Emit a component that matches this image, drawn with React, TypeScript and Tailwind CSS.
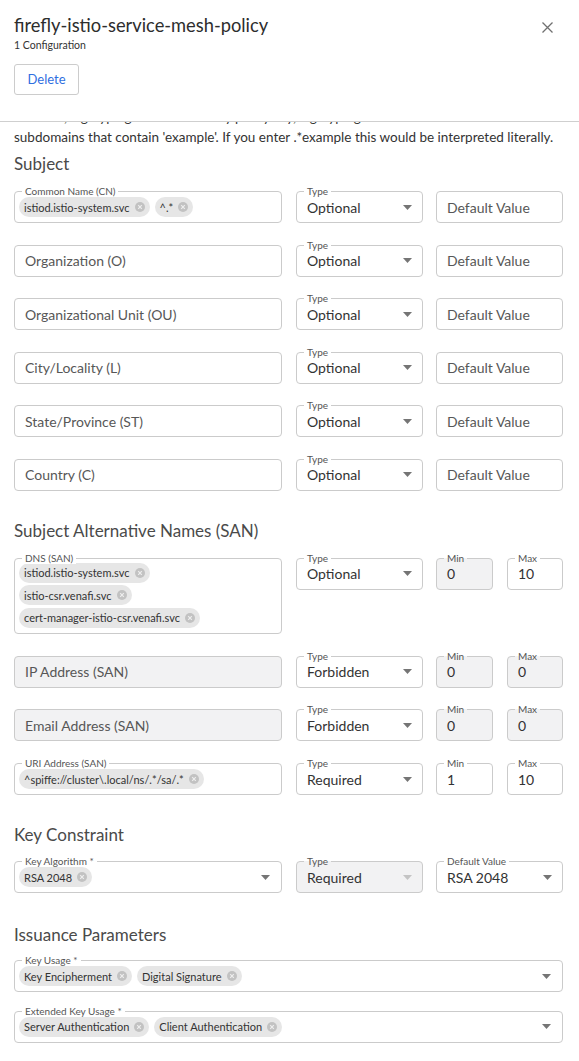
import React from "react";

const FONT = { fontFamily: "Lato, 'Noto Sans', sans-serif" };

function Arrow({ light }: { light?: boolean }) {
  return (
    <svg width="9" height="5" viewBox="0 0 9 5" className="shrink-0">
      <path d="M0 0 L9 0 L4.5 5 Z" fill={light ? "#c4c4c4" : "#757575"} />
    </svg>
  );
}

function Chip({ text }: { text: string }) {
  return (
    <span className="inline-flex h-[20px] items-center gap-[5px] rounded-full bg-[#e6e6e6] pl-[5px] pr-[5px] text-[11px] leading-none text-[#333] whitespace-nowrap">
      <span>{text}</span>
      <svg width="10" height="10" viewBox="0 0 10 10">
        <circle cx="5" cy="5" r="5" fill="#c2c2c2" />
        <path d="M3.2 3.2 L6.8 6.8 M6.8 3.2 L3.2 6.8" stroke="#eeeeee" strokeWidth="1.2" />
      </svg>
    </span>
  );
}

function Box({
  label,
  gray,
  className = "",
  children,
}: {
  label?: string;
  gray?: boolean;
  className?: string;
  children?: React.ReactNode;
}) {
  return (
    <div
      className={`relative rounded-[4px] border border-[#cbcbcb] ${
        gray ? "bg-[#f2f2f3]" : "bg-white"
      } ${className}`}
    >
      {label && (
        <span
          className={`absolute left-[7px] -top-[7px] px-[3px] text-[10px] leading-[12px] text-[#555] whitespace-nowrap ${
            gray
              ? "bg-[linear-gradient(to_bottom,#ffffff_50%,#f2f2f3_50%)]"
              : "bg-white"
          }`}
        >
          {label}
        </span>
      )}
      {children}
    </div>
  );
}

function Select({
  value,
  gray,
  light,
  label = "Type",
  className = "",
}: {
  value: string;
  gray?: boolean;
  light?: boolean;
  label?: string;
  className?: string;
}) {
  return (
    <Box label={label} gray={gray} className={`h-8 ${className}`}>
      <div className="flex h-full items-center justify-between pl-[10px] pr-[10px]">
        <span className="text-[14px] text-[#333]">{value}</span>
        <Arrow light={light} />
      </div>
    </Box>
  );
}

function TextBox({
  placeholder,
  value,
  label,
  gray,
  className = "",
}: {
  placeholder?: string;
  value?: string;
  label?: string;
  gray?: boolean;
  className?: string;
}) {
  return (
    <Box label={label} gray={gray} className={`h-8 ${className}`}>
      <div className="flex h-full items-center pl-[10px]">
        {value !== undefined ? (
          <span className="text-[14px] text-[#333]">{value}</span>
        ) : (
          <span className="text-[14px] text-[#575757]">{placeholder}</span>
        )}
      </div>
    </Box>
  );
}

function ChipBox({
  label,
  chips,
  arrow,
  className = "",
}: {
  label: string;
  chips: string[];
  arrow?: boolean;
  className?: string;
}) {
  return (
    <Box label={label} className={`h-8 ${className}`}>
      <div className="flex h-full items-center justify-between pl-[4px] pr-[11px]">
        <div className="flex items-center gap-[5px]">
          {chips.map((c) => (
            <Chip key={c} text={c} />
          ))}
        </div>
        {arrow && <Arrow />}
      </div>
    </Box>
  );
}

function Heading({ children }: { children: React.ReactNode }) {
  return <h2 className="text-[17px] leading-[24px] text-[#4a4a4a]">{children}</h2>;
}

function SubjectRow({ name, chips }: { name: string; chips?: string[] }) {
  return (
    <div className="flex gap-[13px]">
      {chips ? (
        <ChipBox label={name} chips={chips} className="w-[268px] mr-[1px]" />
      ) : (
        <TextBox placeholder={name} className="w-[268px] mr-[1px]" />
      )}
      <Select value="Optional" className="w-[127px]" />
      <TextBox placeholder="Default Value" className="w-[127px]" />
    </div>
  );
}

function SanRow({
  name,
  type,
  min,
  max,
  disabled,
}: {
  name: string;
  type: string;
  min: string;
  max: string;
  disabled?: boolean;
}) {
  return (
    <div className="flex gap-[13px]">
      <TextBox placeholder={name} gray={disabled} className="w-[268px] mr-[1px]" />
      <Select value={type} className="w-[127px]" />
      <div className="flex gap-[14px]">
        <TextBox label="Min" value={min} gray={disabled} className="w-[57px]" />
        <TextBox label="Max" value={max} gray={disabled} className="w-[56px]" />
      </div>
    </div>
  );
}

export default function App() {
  return (
    <div className="h-[1061px] w-[579px] overflow-hidden bg-white text-[#333]" style={FONT}>
      {/* Header */}
      <div className="flex h-[122px] flex-col items-start border-b border-[#cfcfcf] pl-[14px] pr-[16px] pt-[13px]">
        <div className="flex w-full items-start justify-between">
          <div>
            <h1 className="text-[18.3px] leading-[24px] text-[#2d2d2d]">
              firefly-istio-service-mesh-policy
            </h1>
            <div className="mt-[2px] text-[10.5px] leading-[12px] text-[#333]">1 Configuration</div>
          </div>
          <button className="mt-[9px] mr-[10px] p-0">
            <svg width="11" height="11" viewBox="0 0 11 11" className="block">
              <path d="M0.5 0.5 L10.5 10.5 M10.5 0.5 L0.5 10.5" stroke="#707070" strokeWidth="1.3" />
            </svg>
          </button>
        </div>
        <button className="mt-[13px] h-[31px] w-[65px] rounded-[3px] border border-[#cccccc] bg-white text-[13px] text-[#2f6fdf]">
          Delete
        </button>
      </div>

      {/* Content */}
      <div className="pl-[14px] pr-[16px]">
        <div className="h-[5px] overflow-hidden">
          <p className="-mt-[15px] text-[13.5px] leading-[20px] text-[#333] whitespace-nowrap">
            wildcard, e.g. typing .* will match any policy key, e.g. typing .*
          </p>
        </div>
        <p className="text-[13.5px] leading-[20px] text-[#333] whitespace-nowrap">
          subdomains that contain 'example'. If you enter .*example this would be interpreted literally.
        </p>

        <div className="mt-[5px]">
          <Heading>Subject</Heading>
        </div>
        <div className="mt-[15px] flex flex-col gap-[21.6px]">
          <SubjectRow name="Common Name (CN)" chips={["istiod.istio-system.svc", "^.*"]} />
          <SubjectRow name="Organization (O)" />
          <SubjectRow name="Organizational Unit (OU)" />
          <SubjectRow name="City/Locality (L)" />
          <SubjectRow name="State/Province (ST)" />
          <SubjectRow name="Country (C)" />
        </div>

        <div className="mt-[28px]">
          <Heading>Subject Alternative Names (SAN)</Heading>
        </div>
        <div className="mt-[15px] flex flex-col gap-[21.7px]">
          <div className="flex gap-[13px]">
            <Box label="DNS (SAN)" className="w-[268px] mr-[1px]">
              <div className="flex flex-col items-start gap-[2.5px] pl-[4px] pt-[4px] pb-[5px]">
                <Chip text="istiod.istio-system.svc" />
                <Chip text="istio-csr.venafi.svc" />
                <Chip text="cert-manager-istio-csr.venafi.svc" />
              </div>
            </Box>
            <Select value="Optional" className="w-[127px]" />
            <div className="flex gap-[14px]">
              <TextBox label="Min" value="0" gray className="w-[57px]" />
              <TextBox label="Max" value="10" className="w-[56px]" />
            </div>
          </div>
          <SanRow name="IP Address (SAN)" type="Forbidden" min="0" max="0" disabled />
          <SanRow name="Email Address (SAN)" type="Forbidden" min="0" max="0" disabled />
          <div className="flex gap-[13px]">
            <ChipBox
              label="URI Address (SAN)"
              chips={["^spiffe://cluster\\.local/ns/.*/sa/.*"]}
              className="w-[268px] mr-[1px]"
            />
            <Select value="Required" className="w-[127px]" />
            <div className="flex gap-[14px]">
              <TextBox label="Min" value="1" className="w-[57px]" />
              <TextBox label="Max" value="10" className="w-[56px]" />
            </div>
          </div>
        </div>

        <div className="mt-[28px]">
          <Heading>Key Constraint</Heading>
        </div>
        <div className="mt-[14px] flex gap-[13px]">
          <ChipBox label="Key Algorithm *" chips={["RSA 2048"]} arrow className="w-[268px] mr-[1px]" />
          <Select value="Required" gray light className="w-[127px]" />
          <Select value="RSA 2048" label="Default Value" className="w-[127px]" />
        </div>

        <div className="mt-[30px]">
          <Heading>Issuance Parameters</Heading>
        </div>
        <div className="mt-[13px] flex flex-col gap-[18.5px]">
          <ChipBox label="Key Usage *" chips={["Key Encipherment", "Digital Signature"]} arrow />
          <ChipBox
            label="Extended Key Usage *"
            chips={["Server Authentication", "Client Authentication"]}
            arrow
          />
        </div>
      </div>
    </div>
  );
}
